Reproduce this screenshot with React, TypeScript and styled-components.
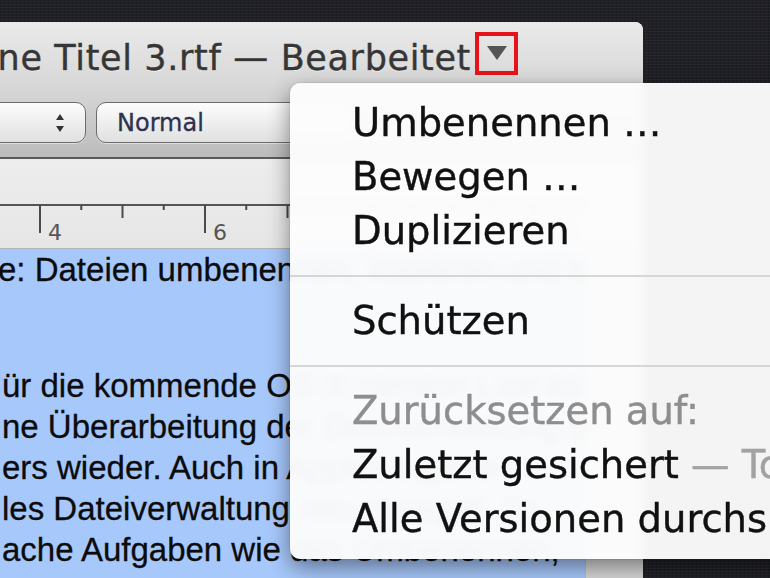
import React from 'react';
import styled, { createGlobalStyle } from 'styled-components';

const GlobalStyle = createGlobalStyle`
  html, body {
    margin: 0;
    padding: 0;
    background: #212228;
  }
  body {
    width: 770px;
    height: 578px;
    overflow: hidden;
  }
`;

const Desktop = styled.div`
  position: relative;
  width: 770px;
  height: 578px;
  box-sizing: border-box;
  padding-top: 22px;
  overflow: hidden;
  background-color: #202127;
  background-image:
    repeating-linear-gradient(0deg, rgba(255, 255, 255, 0.03) 0 1px, transparent 1px 3px),
    repeating-linear-gradient(90deg, rgba(0, 0, 0, 0.2) 0 1px, transparent 1px 4px);
`;

const Window = styled.div`
  width: 643px;
  height: 556px;
  border-top-right-radius: 8px;
  overflow: hidden;
  display: flex;
  flex-direction: column;
  background: #e6e6e6;
`;

const TitleBar = styled.div`
  height: 62px;
  flex-shrink: 0;
  display: flex;
  align-items: center;
  overflow: hidden;
  background: linear-gradient(#eaeaea, #d8d8d8);
`;

const TitleGroup = styled.div`
  width: 518px;
  flex-shrink: 0;
  display: flex;
  justify-content: flex-end;
  align-items: center;
  gap: 4px;
`;

const TitleText = styled.span`
  flex-shrink: 0;
  margin-top: 10px;
  white-space: nowrap;
  font: 35px/40px "DejaVu Sans", sans-serif;
  letter-spacing: 0.65px;
  color: #363636;
  -webkit-text-stroke: 0.4px #363636;
  text-shadow: 0 1px 0 rgba(255, 255, 255, 0.7);
`;

const Highlight = styled.div`
  box-sizing: border-box;
  width: 43px;
  height: 43px;
  flex-shrink: 0;
  border: 4px solid #e5141b;
  display: flex;
  align-items: center;
  justify-content: center;
`;

const Toolbar = styled.div`
  height: 75px;
  flex-shrink: 0;
  box-sizing: border-box;
  padding-top: 18px;
  display: flex;
  align-items: flex-start;
  gap: 10px;
  background: linear-gradient(#d8d8d8, #bcbcbc);
  border-bottom: 2px solid #5a5a5a;
`;

const ToolButton = styled.div<{ $width: number; $offset?: number }>`
  box-sizing: border-box;
  width: ${p => p.$width}px;
  height: 41px;
  flex-shrink: 0;
  margin-left: ${p => p.$offset || 0}px;
  padding: 0 20px;
  display: flex;
  align-items: center;
  justify-content: space-between;
  border: 1.5px solid #6c6c6c;
  border-radius: 10px;
  background: linear-gradient(#fdfdfd, #e0e0e0);
  box-shadow: 0 1px 0 rgba(255, 255, 255, 0.5);
  font: 24px "DejaVu Sans", sans-serif;
  color: #2e3150;
  -webkit-text-stroke: 0.3px #2e3150;
`;

const RulerBar = styled.div`
  height: 89px;
  flex-shrink: 0;
  background: linear-gradient(#ededed, #e6e6e6);
  border-bottom: 1px solid #b4b4b4;
`;

const DocArea = styled.div`
  flex: 1;
  display: flex;
`;

const Page = styled.div`
  width: 585px;
  flex-shrink: 0;
  overflow: hidden;
  background: #a7c8fb;
  font: 33px/41px "Liberation Sans", Arial, sans-serif;
  color: #0c0c0c;
  -webkit-text-stroke: 0.3px #0c0c0c;
`;

const Paragraph = styled.div<{ $gap?: number }>`
  margin-top: ${p => p.$gap || 0}px;
  padding-left: 2px;
`;

const Line = styled.div<{ $shift?: number }>`
  white-space: nowrap;
  margin-left: ${p => p.$shift || 0}px;
`;

const Gutter = styled.div`
  flex: 1;
  background: #d7d7d7;
  border-left: 1px solid #bdbdbd;
`;

const Menu = styled.div`
  position: absolute;
  left: 290px;
  top: 83px;
  width: 520px;
  padding: 13px 0 13px;
  background: rgba(252, 252, 252, 0.965);
  backdrop-filter: blur(5px);
  border-radius: 10px 0 0 10px;
  box-shadow: 0 8px 22px rgba(0, 0, 0, 0.45), 0 0 0 1px rgba(0, 0, 0, 0.06);
`;

const MenuItem = styled.div<{ $disabled?: boolean }>`
  height: 54px;
  padding-left: 62px;
  white-space: nowrap;
  font: 38.5px/54px "DejaVu Sans", sans-serif;
  color: ${p => (p.$disabled ? '#8e8e8e' : '#111')};
  -webkit-text-stroke: 0.4px ${p => (p.$disabled ? '#8e8e8e' : '#111')};
`;

const Hint = styled.span`
  color: #a2a2a2;
  -webkit-text-stroke: 0.4px #a2a2a2;
`;

const Separator = styled.div`
  height: 2px;
  margin: 17px 0;
  background: #d6d6d6;
`;

function Ruler() {
  const ticks = [];
  for (let k = -1; k <= 13; k++) {
    const x = 40 + k * 41.25;
    const major = k % 4 === 0;
    const medium = !major && k % 2 === 0;
    const len = major ? 28 : medium ? 13 : 5;
    ticks.push(
      <line key={k} x1={x} y1={46} x2={x} y2={46 + len} stroke="#4a4a4a" strokeWidth={2} />
    );
    if (major && k >= 0) {
      ticks.push(
        <text
          key={'n' + k}
          x={x + 8}
          y={81}
          fontFamily="DejaVu Sans, sans-serif"
          fontSize={22}
          fill="#555"
        >
          {4 + (k / 4) * 2}
        </text>
      );
    }
  }
  return (
    <svg width={643} height={89}>
      <line x1={0} y1={46} x2={585} y2={46} stroke="#555" strokeWidth={2} />
      {ticks}
    </svg>
  );
}

export default function App() {
  return (
    <Desktop>
      <GlobalStyle />
      <Window>
        <TitleBar>
          <TitleGroup>
            <TitleText>Ohne Titel 3.rtf — Bearbeitet</TitleText>
            <Highlight>
              <svg width={22} height={16} viewBox="0 0 22 16">
                <path d="M1 1 L21 1 L11 15 Z" fill="#555" />
              </svg>
            </Highlight>
          </TitleGroup>
        </TitleBar>
        <Toolbar>
          <ToolButton $width={116} $offset={-30}>
            <span />
            <svg width={10} height={20} viewBox="0 0 10 20">
              <path d="M5 1 L9 7 L1 7 Z M5 19 L9 13 L1 13 Z" fill="#333" />
            </svg>
          </ToolButton>
          <ToolButton $width={260}>
            <span>Normal</span>
          </ToolButton>
        </Toolbar>
        <RulerBar>
          <Ruler />
        </RulerBar>
        <DocArea>
          <Page>
            <Paragraph>
              <Line $shift={-4}>e: Dateien umbenennen, kopieren und sperren</Line>
            </Paragraph>
            <Paragraph $gap={75}>
              <Line>ür die kommende OS-X-Version Lion kündigt</Line>
              <Line>ne Überarbeitung der Dateiverwaltung des</Line>
              <Line>ers wieder. Auch in Apples eigenen</Line>
              <Line>les Dateiverwaltung neu geregelt. So</Line>
              <Line>ache Aufgaben wie das Umbenennen,</Line>
            </Paragraph>
          </Page>
          <Gutter />
        </DocArea>
      </Window>
      <Menu>
        <MenuItem>Umbenennen …</MenuItem>
        <MenuItem>Bewegen …</MenuItem>
        <MenuItem>Duplizieren</MenuItem>
        <Separator />
        <MenuItem>Schützen</MenuItem>
        <Separator />
        <MenuItem $disabled>Zurücksetzen auf:</MenuItem>
        <MenuItem>
          Zuletzt gesichert <Hint>— Today, 10:24</Hint>
        </MenuItem>
        <MenuItem>Alle Versionen durchsuchen …</MenuItem>
      </Menu>
    </Desktop>
  );
}
